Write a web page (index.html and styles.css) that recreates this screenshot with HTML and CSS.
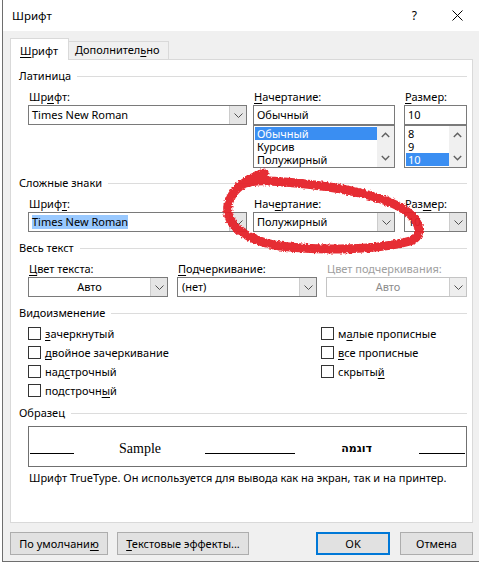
FILE: index.html
```html
<!DOCTYPE html>
<html lang="ru">
<head>
<meta charset="utf-8">
<title>Шрифт</title>
<link rel="stylesheet" href="styles.css">
</head>
<body>
<div class="window">
  <div class="titlebar">
    <span class="title">Шрифт</span>
    <span class="help">?</span>
    <svg class="close" width="11" height="11" viewBox="0 0 11 11"><path d="M0.5 0.5 L10.5 10.5 M10.5 0.5 L0.5 10.5" stroke="#000" stroke-width="1" fill="none"/></svg>
  </div>
  <div class="client">
    <div class="tabs">
      <div class="tab active"><u>Ш</u>рифт</div>
      <div class="tab inactive">Дополнител<u>ь</u>но</div>
    </div>
    <div class="panel">
      <div class="group-head first"><span>Латиница</span></div>
      <div class="row">
        <div class="field c1">
          <div class="label">Шр<u>и</u>фт:</div>
          <div class="combo"><span class="val">Times New Roman</span><span class="btn"><svg width="9" height="5" viewBox="0 0 9 5"><path d="M0.5 0.5 L4.5 4.5 L8.5 0.5" stroke="#505050" fill="none"/></svg></span></div>
        </div>
        <div class="field c2">
          <div class="label"><u>Н</u>ачертание:</div>
          <div class="edit"><span class="val">Обычный</span></div>
          <div class="list">
            <div class="items">
              <div class="item sel">Обычный</div>
              <div class="item">Курсив</div>
              <div class="item">Полужирный</div>
            </div>
            <div class="scroll">
              <svg width="9" height="6" viewBox="0 0 9 6"><path d="M0.8 5 L4.5 1.3 L8.2 5" stroke="#606060" stroke-width="1.4" fill="none"/></svg>
              <svg width="9" height="6" viewBox="0 0 9 6"><path d="M0.8 1 L4.5 4.7 L8.2 1" stroke="#606060" stroke-width="1.4" fill="none"/></svg>
            </div>
          </div>
        </div>
        <div class="field c3">
          <div class="label"><u>Р</u>азмер:</div>
          <div class="edit"><span class="val">10</span></div>
          <div class="list">
            <div class="items">
              <div class="item">8</div>
              <div class="item">9</div>
              <div class="item sel">10</div>
            </div>
            <div class="scroll">
              <svg width="9" height="6" viewBox="0 0 9 6"><path d="M0.8 5 L4.5 1.3 L8.2 5" stroke="#606060" stroke-width="1.4" fill="none"/></svg>
              <svg width="9" height="6" viewBox="0 0 9 6"><path d="M0.8 1 L4.5 4.7 L8.2 1" stroke="#606060" stroke-width="1.4" fill="none"/></svg>
            </div>
          </div>
        </div>
      </div>

      <div class="group-head g2"><span>Сложные знаки</span></div>
      <div class="row">
        <div class="field c1">
          <div class="label">Шриф<u>т</u>:</div>
          <div class="combo"><span class="val"><span class="hl">Times New Roman</span></span><span class="btn"><svg width="9" height="5" viewBox="0 0 9 5"><path d="M0.5 0.5 L4.5 4.5 L8.5 0.5" stroke="#505050" fill="none"/></svg></span></div>
        </div>
        <div class="field c2">
          <div class="label">Нач<u>е</u>ртание:</div>
          <div class="combo"><span class="val">Полужирный</span><span class="btn"><svg width="9" height="5" viewBox="0 0 9 5"><path d="M0.5 0.5 L4.5 4.5 L8.5 0.5" stroke="#505050" fill="none"/></svg></span></div>
        </div>
        <div class="field c3">
          <div class="label">Раз<u>м</u>ер:</div>
          <div class="combo"><span class="val">10</span><span class="btn"><svg width="9" height="5" viewBox="0 0 9 5"><path d="M0.5 0.5 L4.5 4.5 L8.5 0.5" stroke="#505050" fill="none"/></svg></span></div>
        </div>
      </div>

      <div class="group-head g3"><span>Весь текст</span></div>
      <div class="row">
        <div class="field d1">
          <div class="label"><u>Ц</u>вет текста:</div>
          <div class="combo drop"><span class="val center">Авто</span><span class="btn"><svg width="9" height="5" viewBox="0 0 9 5"><path d="M0.5 0.5 L4.5 4.5 L8.5 0.5" stroke="#505050" fill="none"/></svg></span></div>
        </div>
        <div class="field d2">
          <div class="label"><u>П</u>одчеркивание:</div>
          <div class="combo drop"><span class="val">(нет)</span><span class="btn"><svg width="9" height="5" viewBox="0 0 9 5"><path d="M0.5 0.5 L4.5 4.5 L8.5 0.5" stroke="#505050" fill="none"/></svg></span></div>
        </div>
        <div class="field d3 disabled">
          <div class="label">Цвет подчеркивания:</div>
          <div class="combo drop"><span class="val center">Авто</span><span class="btn"><svg width="9" height="5" viewBox="0 0 9 5"><path d="M0.5 0.5 L4.5 4.5 L8.5 0.5" stroke="#505050" fill="none"/></svg></span></div>
        </div>
      </div>

      <div class="group-head g4"><span>Видоизменение</span></div>
      <div class="checks">
        <div class="col">
          <div class="check"><span class="box"></span><span><u>з</u>ачеркнутый</span></div>
          <div class="check"><span class="box"></span><span><u>д</u>войное зачеркивание</span></div>
          <div class="check"><span class="box"></span><span>над<u>с</u>трочный</span></div>
          <div class="check"><span class="box"></span><span>подстрочн<u>ы</u>й</span></div>
        </div>
        <div class="col">
          <div class="check"><span class="box"></span><span>м<u>а</u>лые прописные</span></div>
          <div class="check"><span class="box"></span><span><u>в</u>се прописные</span></div>
          <div class="check"><span class="box"></span><span>скрыты<u>й</u></span></div>
        </div>
      </div>

      <div class="group-head g5"><span>Образец</span></div>
      <div class="sample">
        <span class="rule r1"></span>
        <span class="s-latin">Sample</span>
        <span class="rule r2"></span>
        <span class="s-hebrew" dir="rtl">דוגמה</span>
        <span class="rule r3"></span>
      </div>
      <div class="caption">Шрифт TrueType. Он используется для вывода как на экран, так и на принтер.</div>
    </div>
    <div class="buttons">
      <div class="button b-default">По умолчани<u>ю</u></div>
      <div class="button b-effects"><u>Т</u>екстовые эффекты...</div>
      <div class="button b-ok">OK</div>
      <div class="button b-cancel">Отмена</div>
    </div>
  </div>
</div>
<svg class="scribble" width="479" height="563" viewBox="0 0 479 563">
  <defs>
    <filter id="rough" x="-10%" y="-10%" width="120%" height="120%">
      <feTurbulence type="fractalNoise" baseFrequency="0.45" numOctaves="2" seed="3" result="n"/>
      <feDisplacementMap in="SourceGraphic" in2="n" scale="4" xChannelSelector="R" yChannelSelector="G"/>
    </filter>
  </defs>
  <path filter="url(#rough)" d="M264 173 C250 178 232 188 228 205 C225 225 245 240 280 246 C320 251 380 250 410 241 C425 236 421 218 398 206 C370 192 320 184 270 181 C255 180 245 182 238 187" stroke="#e5222b" stroke-width="9" stroke-linecap="round" fill="none" opacity="0.95"/>
</svg>
</body>
</html>
```
FILE: styles.css
```css
* { box-sizing: border-box; }

body {
  margin: 0;
  width: 479px;
  height: 563px;
  background: #fff;
  font-family: "Noto Sans", "DejaVu Sans", sans-serif;
  font-size: 11px;
  color: #000;
  position: relative;
  overflow: hidden;
}

u { text-decoration: underline; text-underline-offset: 2px; }

.window {
  margin-left: 2px;
  width: 477px;
  height: 562px;
  border-left: 1px solid #6e6e6e;
  border-bottom: 1px solid #6e6e6e;
  background: #f0f0f0;
}

.titlebar {
  height: 31px;
  background: #fff;
  display: flex;
  align-items: center;
  padding-left: 9px;
  padding-right: 16px;
}
.title { line-height: 16px; font-size: 11.5px; }
.help { margin-left: auto; font-size: 12px; line-height: 16px; }
.close { margin-left: 35px; }

.client {
  padding: 7px 6px 0 7px;
}

.tabs {
  display: flex;
  align-items: flex-end;
  height: 21px;
  position: relative;
  z-index: 1;
}
.tab { line-height: 16px; }
.tab.active {
  width: 59px;
  height: 22px;
  margin-bottom: -1px;
  background: #fff;
  border: 1px solid #d9d9d9;
  border-bottom: none;
  padding: 4px 0 0 9px;
}
.tab.inactive {
  width: 100px;
  height: 18px;
  border: 1px solid #d9d9d9;
  border-left: none;
  border-bottom: none;
  padding: 0 0 0 6px;
}

.panel {
  background: #fff;
  border: 1px solid #d9d9d9;
  height: 464px;
  padding: 0 5px 0 8px;
}

.group-head {
  display: flex;
  align-items: center;
  height: 16px;
  line-height: 16px;
  gap: 6px;
}
.group-head::after {
  content: "";
  flex: 1;
  height: 1px;
  background: #dcdcdc;
}
.group-head.first { margin-top: 8px; }
.group-head.g2 { margin-top: 7px; }
.group-head.g3 { margin-top: 8px; }
.group-head.g4 { margin-top: 8px; }
.group-head.g5 { margin-top: 5px; }

.row {
  display: flex;
  padding-left: 9px;
  margin-top: 5px;
}
.label { line-height: 16px; height: 16px; padding-left: 1px; }

.c1 { width: 219px; }
.c2 { width: 142px; margin-left: 6px; }
.c3 { width: 63px; margin-left: 9px; }
.d1 { width: 140px; }
.d2 { width: 140px; margin-left: 9px; }
.d3 { width: 141px; margin-left: 9px; }

.combo, .edit {
  height: 20px;
  border: 1px solid #7a7a7a;
  background: #fff;
  display: flex;
}
.val {
  flex: 1;
  line-height: 18px;
  padding-left: 3px;
  white-space: nowrap;
  overflow: hidden;
}
.drop .val { padding-left: 4px; }
.val.center { text-align: center; padding-left: 0; }
.btn {
  width: 17px;
  background: #e5e5e5;
  border-left: 1px solid #cccccc;
  display: flex;
  align-items: center;
  justify-content: center;
}
.hl {
  background: #99c9ff;
  color: #000;
  display: inline-block;
  line-height: 14px;
}

.list {
  height: 43px;
  border: 1px solid #7a7a7a;
  display: flex;
}
.items { flex: 1; padding: 1px 0 0 1px; }
.item { line-height: 13px; height: 13px; padding-left: 2px; white-space: nowrap; }
.item.sel { background: #3a8ef2; color: #fff; }
.scroll {
  width: 17px;
  background: #f0f0f0;
  display: flex;
  flex-direction: column;
  justify-content: space-between;
  align-items: center;
  padding: 6px 0 6px;
}

.disabled .label { color: #a0a0a0; }
.disabled .combo { border-color: #c4c4c4; }
.disabled .val { color: #8c8c8c; }
.disabled .btn { background: #eeeeee; }

.checks {
  display: grid;
  grid-template-columns: 293px 1fr;
  padding-left: 9px;
  margin-top: 3px;
}
.check {
  display: flex;
  align-items: center;
  height: 19px;
  gap: 4px;
}
.box {
  width: 13px;
  height: 13px;
  border: 1px solid #333;
  background: #fff;
  flex: none;
}

.sample {
  margin: 5px 0 0 9px;
  height: 41px;
  border: 1px solid #707070;
  display: flex;
  align-items: center;
  padding-top: 4px;
}
.rule { height: 1px; background: #000; margin-top: 9px; }
.r1 { width: 44px; margin-left: 1px; }
.s-latin { font-family: "Liberation Serif", serif; font-size: 14px; margin-left: 45px; }
.r2 { width: 90px; margin-left: 44px; }
.s-hebrew { font-family: "DejaVu Sans", sans-serif; font-weight: bold; font-size: 11px; margin-left: 47px; width: 30px; }
.r3 { width: 46px; margin-left: 47px; }

.caption {
  margin-top: 3px;
  padding-left: 10px;
  line-height: 16px;
  white-space: nowrap;
}

.buttons {
  display: flex;
  margin-top: 9px;
}
.button {
  height: 23px;
  background: #e1e1e1;
  border: 1px solid #adadad;
  line-height: 21px;
  text-align: center;
  white-space: nowrap;
}
.b-default { width: 98px; }
.b-effects { width: 132px; margin-left: 9px; }
.b-ok { width: 74px; margin-left: auto; border: 2px solid #0078d7; line-height: 19px; }
.b-cancel { width: 73px; margin-left: 10px; }

.scribble {
  position: absolute;
  left: 0;
  top: 0;
  pointer-events: none;
}
```
